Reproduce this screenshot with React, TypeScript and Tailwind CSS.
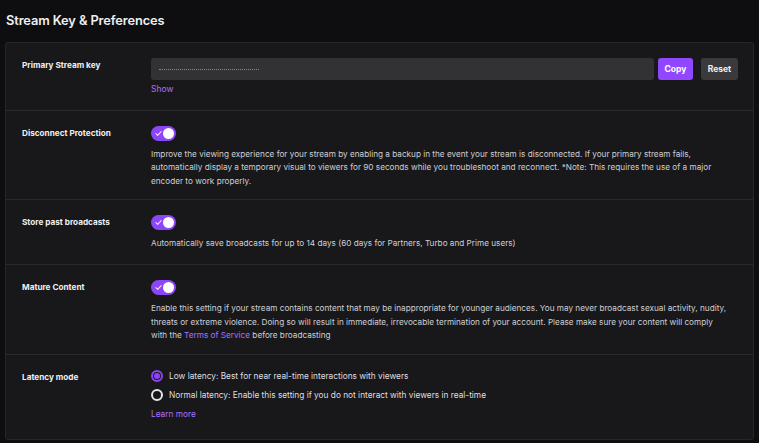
import React from "react";

function Toggle() {
  return (
    <div className="relative h-[15px] w-[25px] rounded-full bg-[#8c45f7]">
      <svg className="absolute left-[4px] top-[4px]" width="7" height="7" viewBox="0 0 8 8">
        <path d="M1 4.2 L3.1 6.2 L7 1.8" fill="none" stroke="#e9dcff" strokeWidth="1.3" strokeLinecap="round" strokeLinejoin="round" />
      </svg>
      <div className="absolute right-[2px] top-[2px] h-[11px] w-[11px] rounded-full bg-white" />
    </div>
  );
}

function Radio({ checked }: { checked: boolean }) {
  return checked ? (
    <div className="flex h-[12px] w-[12px] items-center justify-center rounded-full border-[2px] border-[#8c45f7]">
      <div className="h-[6px] w-[6px] rounded-full bg-[#8c45f7]" />
    </div>
  ) : (
    <div className="h-[12px] w-[12px] rounded-full border-[2px] border-[#e6e6e8]" />
  );
}

function Row({ label, children, pb, last }: { label: string; children: React.ReactNode; pb: string; last?: boolean }) {
  return (
    <div className={`flex pl-4 pr-[15px] pt-[15px] ${pb} ${last ? "" : "border-b border-[#2a2a2e]"}`}>
      <div className="w-[129px] shrink-0 pt-[1px] text-[8.2px] font-bold leading-[13px] text-[#efeff1]">{label}</div>
      <div className="flex-1">{children}</div>
    </div>
  );
}

export default function App() {
  return (
    <div
      className="h-[443px] w-[759px] overflow-hidden bg-[#0e0e10] px-[5px]"
      style={{ fontFamily: "Inter, 'Noto Sans', sans-serif" }}
    >
      <div className="pl-[1px] pt-[11px] pb-[11px] text-[12.8px] font-semibold leading-[20px] tracking-[-0.1px] text-[#efeff1]">
        Stream Key &amp; Preferences
      </div>
      <div className="rounded-[3px] border border-[#26262a] bg-[#18181b]">
        <Row label="Primary Stream key" pb="pb-[12px]">
          <div className="flex">
            <div className="flex h-[22px] flex-1 items-center rounded-[3px] bg-[#323235] pl-[8px]">
              <div className="h-0 w-[100px] border-t border-dotted border-[#8a8a90]" />
            </div>
            <button className="ml-[4px] h-[22px] w-[35px] rounded-[3px] bg-[#9147ff] text-[8.5px] font-bold text-white">Copy</button>
            <button className="ml-[8px] h-[22px] w-[37px] rounded-[3px] bg-[#3a3a3d] text-[8.5px] font-bold text-[#efeff1]">Reset</button>
          </div>
          <div className="mt-[3px] pb-[2px] text-[8.5px] leading-[13px] text-[#a970ff]">Show</div>
        </Row>
        <Row label="Disconnect Protection" pb="pb-[11px]">
          <Toggle />
          <p className="mt-[7px] whitespace-nowrap text-[8.2px] leading-[13.3px] text-[#cfcfd3]">
            Improve the viewing experience for your stream by enabling a backup in the event your stream is disconnected. If your primary stream fails,
            <br />
            automatically display a temporary visual to viewers for 90 seconds while you troubleshoot and reconnect. *Note: This requires the use of a major
            <br />
            encoder to work properly.
          </p>
        </Row>
        <Row label="Store past broadcasts" pb="pb-[14px]">
          <Toggle />
          <p className="mt-[7px] whitespace-nowrap text-[8.2px] leading-[13.3px] text-[#cfcfd3]">
            Automatically save broadcasts for up to 14 days (60 days for Partners, Turbo and Prime users)
          </p>
        </Row>
        <Row label="Mature Content" pb="pb-[11px]">
          <Toggle />
          <p className="mt-[7px] whitespace-nowrap text-[8.2px] leading-[13.5px] text-[#cfcfd3]">
            Enable this setting if your stream contains content that may be inappropriate for younger audiences. You may never broadcast sexual activity, nudity,
            <br />
            threats or extreme violence. Doing so will result in immediate, irrevocable termination of your account. Please make sure your content will comply
            <br />
            with the <span className="text-[#a970ff]">Terms of Service</span> before broadcasting
          </p>
        </Row>
        <Row label="Latency mode" pb="pb-[18px]" last>
          <div className="flex flex-col gap-[7px]">
            <div className="flex items-center gap-[6px]">
              <Radio checked />
              <span className="text-[8.3px] leading-[12px] text-[#dedee2]">Low latency: Best for near real-time interactions with viewers</span>
            </div>
            <div className="flex items-center gap-[6px]">
              <Radio checked={false} />
              <span className="text-[8.3px] leading-[12px] text-[#dedee2]">Normal latency: Enable this setting if you do not interact with viewers in real-time</span>
            </div>
          </div>
          <div className="mt-[7px] text-[8.3px] leading-[13px] text-[#a970ff]">Learn more</div>
        </Row>
      </div>
    </div>
  );
}
